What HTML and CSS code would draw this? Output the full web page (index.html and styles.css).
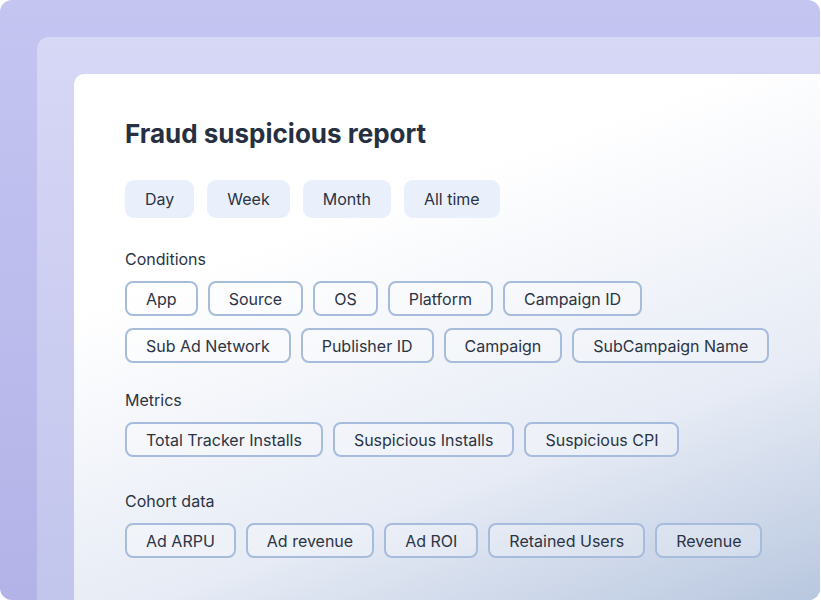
FILE: index.html
```html
<!DOCTYPE html>
<html lang="en">
<head>
    <meta charset="UTF-8">
    <meta name="viewport" content="width=device-width, initial-scale=1.0">
    <title>Fraud suspicious report</title>
    <link rel="stylesheet" href="styles.css">
</head>
<body>

<div class="frame">
    <div class="layer">
        <div class="card">
            <h1 class="title">Fraud suspicious report</h1>

            <div class="periods">
                <button class="period">Day</button>
                <button class="period">Week</button>
                <button class="period">Month</button>
                <button class="period">All time</button>
            </div>

            <div class="section conditions">
                <div class="label">Conditions</div>
                <div class="chips">
                    <span class="chip">App</span>
                    <span class="chip">Source</span>
                    <span class="chip">OS</span>
                    <span class="chip">Platform</span>
                    <span class="chip">Campaign ID</span>
                    <span class="chip">Sub Ad Network</span>
                    <span class="chip">Publisher ID</span>
                    <span class="chip">Campaign</span>
                    <span class="chip">SubCampaign Name</span>
                </div>
            </div>

            <div class="section metrics">
                <div class="label">Metrics</div>
                <div class="chips">
                    <span class="chip">Total Tracker Installs</span>
                    <span class="chip">Suspicious Installs</span>
                    <span class="chip">Suspicious CPI</span>
                </div>
            </div>

            <div class="section cohort">
                <div class="label">Cohort data</div>
                <div class="chips">
                    <span class="chip">Ad ARPU</span>
                    <span class="chip">Ad revenue</span>
                    <span class="chip">Ad ROI</span>
                    <span class="chip">Retained Users</span>
                    <span class="chip">Revenue</span>
                </div>
            </div>
        </div>
    </div>
</div>

</body>
</html>
```

FILE: styles.css
```css
body {
    margin: 0;
    background-color: #fff;
    font-family: 'Inter', 'Liberation Sans', sans-serif;
    color: #2b3445;
}
.frame {
    width: 820px;
    height: 600px;
    box-sizing: border-box;
    padding: 37px 0 0 37px;
    display: flex;
    border-radius: 12px;
    overflow: hidden;
    background: linear-gradient(180deg, #c5c5f2 0%, #b3b3e8 100%);
}
.layer {
    flex: 1;
    display: flex;
    padding: 37px 0 0 37px;
    border-radius: 12px 0 0 0;
    background: linear-gradient(180deg, #d7d7f6 0%, #c2c5ec 100%);
}
.card {
    flex: 1;
    padding: 44px 0 0 51px;
    border-radius: 10px 0 0 0;
    background: linear-gradient(160deg, #fff 30%, #e6ebf5 70%, #b8c7df 100%);
}
.title {
    margin: 0 0 30px;
    font-size: 26px;
    line-height: 32px;
    font-weight: 700;
    color: #263041;
}
.periods {
    display: flex;
    gap: 13px;
}
.period {
    height: 38px;
    padding: 0 20px;
    border: none;
    border-radius: 9px;
    background-color: #e9f0fc;
    font-family: inherit;
    font-size: 16px;
    color: #2b3445;
}
.conditions {
    margin-top: 31px;
}
.metrics {
    margin-top: 27px;
}
.cohort {
    margin-top: 34px;
}
.label {
    font-size: 16px;
    line-height: 20px;
    margin-bottom: 12px;
}
.chips {
    display: flex;
    flex-wrap: wrap;
    gap: 12px 10px;
    width: 660px;
}
.chip {
    height: 35px;
    box-sizing: border-box;
    padding: 0 19px;
    display: flex;
    align-items: center;
    border: 2px solid #a7bcdc;
    border-radius: 8px;
    background-color: rgba(255, 255, 255, 0.25);
    font-size: 16px;
}
```
